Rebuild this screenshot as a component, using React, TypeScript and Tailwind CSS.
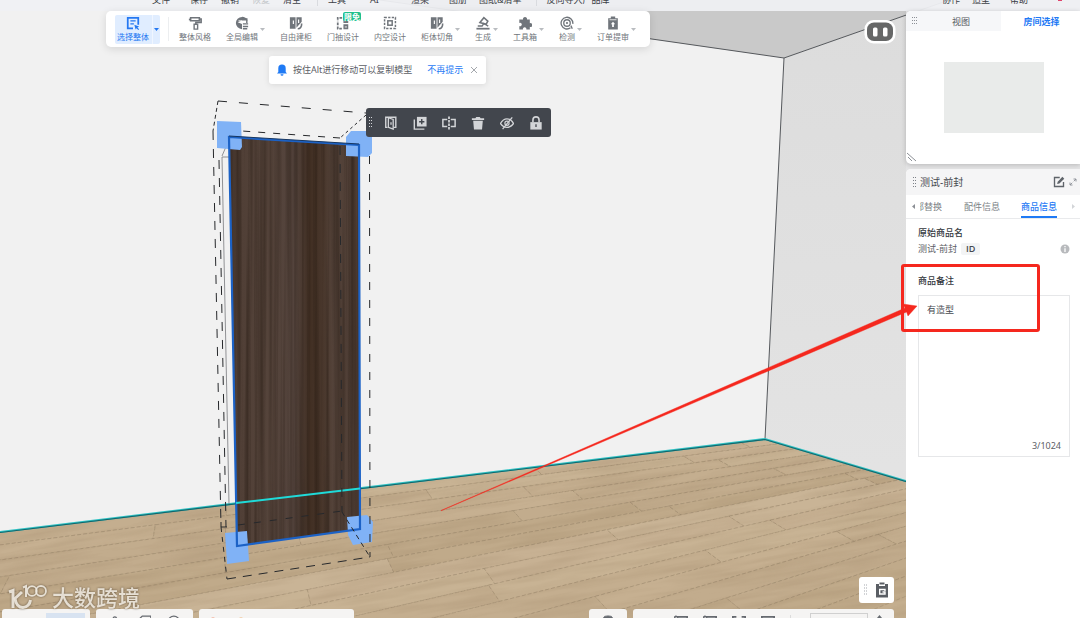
import React, { useState } from 'react';
import clsx from 'clsx';

/* ------------------------------------------------------------------ */
/* Scene geometry                                                      */
/* ------------------------------------------------------------------ */

type Point = [number, number];

// Seams run towards SEAM_VP, plank ends run towards JOINT_VP.
const SEAM_VP: Point = [1516, 348];
const JOINT_VP: Point = [212, 181];
const SEAMS = [532, 545, 560, 577, 594, 612, 631, 651, 672, 698, 726, 757, 791, 828, 870, 915, 965];
const PLANK_COLORS = ['#c6b091', '#c0aa8a', '#c8b394', '#c2ac8d', '#c9b496', '#c4ae8f', '#bfa989', '#c7b193'];

// Crossing of the seam that starts at (0, y0) and the joint line that hits y=618 at t.
function crossing(y0: number, t: number): Point {
  const [sx, sy] = SEAM_VP;
  const [jx, jy] = JOINT_VP;
  const m = (sy - y0) / sx;
  const k = (t - jx) / (618 - jy);
  const y = (y0 + m * (jx - k * jy)) / (1 - m * k);
  return [jx + k * (y - jy), y];
}

function buildPlanks() {
  const planks: { points: string; fill: string }[] = [];
  for (let row = 0; row < SEAMS.length - 1; row++) {
    let t = -500 - ((row * 197) % 330);
    let n = 0;
    while (t < 1600) {
      const next = t + 330 + ((row * 53 + n * 71) % 150);
      const corners = [
        crossing(SEAMS[row], t),
        crossing(SEAMS[row], next),
        crossing(SEAMS[row + 1], next),
        crossing(SEAMS[row + 1], t),
      ];
      planks.push({
        points: corners.map((p) => `${p[0].toFixed(1)},${p[1].toFixed(1)}`).join(' '),
        fill: PLANK_COLORS[(row * 3 + n * 5) % PLANK_COLORS.length],
      });
      t = next;
      n++;
    }
  }
  return planks;
}

const PLANKS = buildPlanks();

function Scene() {
  return (
    <svg
      className="absolute inset-0 h-full w-full"
      viewBox="0 0 1080 618"
      preserveAspectRatio="xMinYMin slice"
      aria-hidden="true"
    >
      <defs>
        <clipPath id="floor">
          <path d="M0 532 L765 439 L1080 533 V618 H0 Z" />
        </clipPath>
        <linearGradient id="rightWall" x1="0" y1="0" x2="0" y2="1">
          <stop offset="0" stopColor="#dcdcdc" />
          <stop offset="1" stopColor="#e4e4e4" />
        </linearGradient>
        <linearGradient id="board" x1="0" y1="0" x2="1" y2="0">
          <stop offset="0" stopColor="#4e3d34" />
          <stop offset="0.3" stopColor="#55443b" />
          <stop offset="0.5" stopColor="#53433c" />
          <stop offset="0.62" stopColor="#412f23" />
          <stop offset="0.72" stopColor="#49372c" />
          <stop offset="0.8" stopColor="#55443b" />
          <stop offset="1" stopColor="#4d3c33" />
        </linearGradient>
        <filter id="grain" x="0" y="0" width="100%" height="100%" colorInterpolationFilters="sRGB">
          <feTurbulence type="fractalNoise" baseFrequency="0.2 0.002" numOctaves="3" seed="11" />
          <feColorMatrix values="0 0 0 0 0.1  0 0 0 0 0.06  0 0 0 0 0.03  2 0 0 0 -0.75" />
          <feComposite in2="SourceGraphic" operator="in" />
        </filter>
        <filter id="floorGrain" x="0" y="0" width="100%" height="100%" colorInterpolationFilters="sRGB">
          <feTurbulence type="fractalNoise" baseFrequency="0.012 0.14" numOctaves="3" seed="8" />
          <feColorMatrix values="0 0 0 0 0.52  0 0 0 0 0.42  0 0 0 0 0.3  1 0 0 0 -0.36" />
          <feComposite in2="SourceGraphic" operator="in" />
        </filter>
      </defs>

      {/* room */}
      <rect width="1080" height="618" fill="#f1f1f1" />
      <path d="M380 0 L784 58 L949 0 Z" fill="#c9c9c9" />
      <path d="M784 58 L949 0 H1080 V533 L765 439 Z" fill="url(#rightWall)" />
      <path d="M380 0 L784 58 L949 0 M784 58 L765 439" fill="none" stroke="#55585c" strokeWidth="1" />

      {/* floor */}
      <g clipPath="url(#floor)">
        <rect y="430" width="1080" height="188" fill="#c4ae8e" />
        {PLANKS.map((p, i) => (
          <polygon key={i} points={p.points} fill={p.fill} stroke="#85765f" strokeOpacity="0.5" strokeWidth="0.6" strokeDasharray="4 2" />
        ))}
        <g transform="rotate(-9 450 520)">
          <rect x="-100" y="380" width="1300" height="420" fill="#000" filter="url(#floorGrain)" opacity="0.32" />
        </g>
      </g>
      <path d="M0 532 L765 439 L1080 533" fill="none" stroke="#2fc3c4" strokeWidth="2" />
      <path d="M0 532.5 L765 439.5 L1080 533.5" fill="none" stroke="#14666c" strokeWidth="1.2" />

      {/* cabinet front */}
      <path d="M229 157 H222 L229 504 M222 156 L228 142" fill="none" stroke="#77797c" strokeWidth="0.8" />
      <path d="M229 137 L359 145 L360 529 L237 546 Z" fill="url(#board)" />
      <path d="M229 137 L359 145 L360 529 L237 546 Z" fill="#000" filter="url(#grain)" opacity="0.45" />
      <g fill="#80b2f6">
        <path d="M217 121 L241 122 L242 147 L240 150 L217 148 Z" />
        <path d="M346 137 L351 131 H372 V153 L368 157 L346 156 Z" />
        <path d="M225 533 L247 531 L249 561 L227 564 Z" />
        <path d="M347 517 L367 515 L373 522 L372 542 L353 545 L348 535 Z" />
      </g>
      <path d="M229 137 L359 145 L360 529 L237 546 Z" fill="none" stroke="#1c62c6" strokeWidth="2.2" />
      <path d="M229 136 L359 144" fill="none" stroke="#17365f" strokeWidth="1" />
      <path d="M236 503 L360 488.500" stroke="#1fdad8" strokeWidth="2" />

      {/* bounding box */}
      <g fill="none" stroke="#26282b" strokeWidth="1">
        <path d="M218 101 L366 113" strokeDasharray="9 12" />
        <path d="M218 101 L213 131" strokeDasharray="4 3" />
        <path d="M366 115 L340 138" strokeDasharray="3 3" />
        <path d="M340 138 L242 131" strokeDasharray="7 8" />
        <path d="M213 131 L221 527" strokeDasharray="9 9" />
        <path d="M219 160 L226 527" strokeDasharray="9 9" />
        <path d="M221 522 V527 H227" />
        <path d="M221 527 L227 579" strokeDasharray="5 5" />
        <path d="M227 579 L370 557" strokeDasharray="9 7" />
        <path d="M369.500 156 L370 557" strokeDasharray="8 10" />
        <path d="M340 146 L342 512" strokeDasharray="9 9" />
        <path d="M238 525 L342 511" strokeDasharray="7 9" />
        <path d="M342 512 L370 557" strokeDasharray="5 4" />
      </g>
    </svg>
  );
}

function Callout() {
  return (
    <svg
      className="pointer-events-none absolute inset-0 z-20 h-full w-full"
      viewBox="0 0 1080 618"
      preserveAspectRatio="xMinYMin slice"
      aria-hidden="true"
    >
      <path d="M441 510.500 L905 308 L903 304 L917 306 L908 316 L906.500 312 L441 510.800 Z" fill="#f5281e" stroke="#f5281e" strokeWidth="0.4" />
      <rect x="902.500" y="265.500" width="136" height="65" rx="1.500" fill="none" stroke="#f5281e" strokeWidth="3" />
    </svg>
  );
}

/* ------------------------------------------------------------------ */
/* Icons                                                               */
/* ------------------------------------------------------------------ */

interface IconProps {
  className?: string;
  children: React.ReactNode;
}

function Icon({ className = 'size-3.5', children }: IconProps) {
  return (
    <svg viewBox="0 0 16 16" className={className} fill="none" stroke="currentColor" strokeWidth="2" aria-hidden="true">
      {children}
    </svg>
  );
}

const ICONS = {
  select: (
    <>
      <path d="M14 10V2H2v12h6" />
      <path d="M5 5.500h6M5 9h4" strokeWidth="1.500" />
      <path d="M9.500 10l5.500 2-2 1 2 2-1 1-2-2-1 1.500z" fill="currentColor" stroke="none" />
    </>
  ),
  style: (
    <>
      <path d="M3 2h10v3.500H3zM13 3.500h2v4H9V10" strokeWidth="1.800" />
      <path d="M1 4h2" />
      <path d="M7 9.500h4V15H7z" strokeWidth="1.600" />
    </>
  ),
  edit: (
    <>
      <path d="M8 1a7 7 0 1 0 0 14V9L3 7l5-2h6.400A7 7 0 0 0 8 1z" fill="currentColor" stroke="none" />
      <path d="M9 3.500h4.500V8M9 9h6M9 12h6M9 14.500h5" strokeWidth="1.600" />
      <path d="M4 5.500h4" stroke="#fff" strokeWidth="1" />
    </>
  ),
  cabinet: (
    <>
      <path d="M1 1.500h6.500v13H1zM8.500 1.500h6v5l-6 7z" fill="currentColor" stroke="none" />
      <path d="M5 5v4M11 4v4" stroke="#fff" strokeWidth="1.300" />
      <path d="M10 14.500c3 0 4.500-2 4.500-6" strokeWidth="1.800" />
    </>
  ),
  door: (
    <>
      <path d="M7 2H2v4M2 7.500v3M2 12v2.500h5" strokeDasharray="3 1.200" />
      <path d="M8.500 2H14v6H8.500zM8.500 9.500H14V15H8.500z" fill="currentColor" stroke="none" />
      <path d="M10 12.500h2.500" stroke="#fff" strokeWidth="1" />
    </>
  ),
  inner: (
    <>
      <rect x="1.800" y="1.800" width="12.400" height="12.400" strokeDasharray="2.600 1.500" strokeWidth="1.700" />
      <rect x="5.500" y="5.500" width="5" height="5" strokeWidth="1.700" />
    </>
  ),
  generate: (
    <>
      <path d="M0.500 14.500h15" />
      <path d="M2 11.500h5l2-3 5 3" strokeWidth="1.600" />
      <path d="M4.500 7.500L9 2l4.500 4-2 3.500z" strokeWidth="1.800" />
    </>
  ),
  puzzle: (
    <path
      d="M1.500 4h4.300a2.300 2.300 0 1 1 4.400 0h3.300v4.300a2.200 2.200 0 1 1 0 4V15.500h-4a2 2 0 1 0-3.800 0H1.500v-4a2 2 0 1 0 0-3.600z"
      fill="currentColor"
      stroke="none"
    />
  ),
  detect: (
    <>
      <path d="M12 13.500A6.700 6.700 0 1 1 14.600 9" strokeWidth="1.500" />
      <circle cx="8" cy="8" r="3.700" strokeWidth="1.500" />
      <circle cx="8" cy="8" r="1.200" fill="currentColor" stroke="none" />
      <path d="M12.500 11l1.500 3.500" strokeWidth="1.500" />
    </>
  ),
  order: (
    <>
      <path d="M2.500 2.500h11V15.500h-11zM5.500 0.500h5v2h-5z" fill="currentColor" stroke="none" />
      <path d="M4 4.300h8" stroke="#fff" strokeWidth="0.900" />
      <path d="M8 6.500l2.500 3H9v3H7v-3H5.500z" fill="#fff" stroke="none" />
    </>
  ),
};

const Arrow = ({ className }: { className?: string }) => (
  <svg viewBox="0 0 6 4" className={clsx('h-[3px] w-[5px]', className)} preserveAspectRatio="none" aria-hidden="true">
    <path d="M0 0h6L3 4z" fill="currentColor" />
  </svg>
);

function Grip({ className, rows = 4, cols = 2 }: { className?: string; rows?: number; cols?: number }) {
  return (
    <svg viewBox={`0 0 ${cols * 2} ${rows * 3 - 1}`} className={className} fill="currentColor" aria-hidden="true">
      {Array.from({ length: rows * cols }, (_, i) => (
        <rect key={i} x={(i % cols) * 2} y={Math.floor(i / cols) * 3} width="1" height="1" />
      ))}
    </svg>
  );
}

/* ------------------------------------------------------------------ */
/* Menu and toolbars                                                   */
/* ------------------------------------------------------------------ */

const MENU_BTN = 'shrink-0 whitespace-nowrap';

function MenuBar() {
  return (
    <header className="relative flex h-[11px] shrink-0 items-end justify-between overflow-hidden bg-[#eff0f3]/95 pb-[5px] pl-[152px] pr-4 text-[9px] leading-3 text-[#3c4046]">
      <nav className="flex items-end">
        <button className={clsx(MENU_BTN, 'mr-5')}>文件</button>
        <div className="flex gap-[13px]">
          <button className={MENU_BTN}>保存</button>
          <button className={MENU_BTN}>撤销</button>
          <button className={clsx(MENU_BTN, 'text-[#c3c6ca]')} disabled>恢复</button>
          <button className={MENU_BTN}>清空</button>
        </div>
        <span className="ml-4 mr-2.5 h-3 w-px bg-[#d9dbdf]" />
        <div className="flex gap-6">
          <button className={MENU_BTN}>工具</button>
          <button className={MENU_BTN}>AI</button>
        </div>
        <div className="ml-8 flex gap-5">
          <button className={MENU_BTN}>渲染</button>
          <button className={MENU_BTN}>图册</button>
        </div>
        <button className={clsx(MENU_BTN, 'ml-3')}>图纸&amp;清单</button>
        <span className="ml-3.5 mr-2.5 h-3 w-px bg-[#d9dbdf]" />
        <button className={MENU_BTN}>反向导入产品库</button>
      </nav>
      <nav className="flex items-end">
        <button className={MENU_BTN}>协作</button>
        <button className={clsx(MENU_BTN, 'ml-3 mr-5')}>造型</button>
        <button className={MENU_BTN}>帮助</button>
        <span className="mb-[5px] ml-[30px] mr-0.5 h-2 w-1 bg-[#e0446c]" />
      </nav>
    </header>
  );
}

interface Tool {
  label: string;
  icon: React.ReactNode;
  menu?: boolean;
  badge?: string;
}

const TOOLS: Tool[] = [
  { label: '整体风格', icon: ICONS.style },
  { label: '全局编辑', icon: ICONS.edit, menu: true },
  { label: '自由建柜', icon: ICONS.cabinet },
  { label: '门抽设计', icon: ICONS.door, badge: '限免' },
  { label: '内空设计', icon: ICONS.inner },
  { label: '柜体切角', icon: ICONS.cabinet, menu: true },
  { label: '生成', icon: ICONS.generate, menu: true },
  { label: '工具箱', icon: ICONS.puzzle, menu: true },
  { label: '检测', icon: ICONS.detect, menu: true },
  { label: '订单提审', icon: ICONS.order, menu: true },
];

function Toolbar() {
  return (
    <div className="ml-[106px] flex h-9 w-fit items-center rounded-[5px] bg-white pl-[9px] pr-3.5 text-[8px] leading-[10px] text-[#70757b] shadow-[0_2px_8px_rgba(0,0,0,0.12)]">
      <button className="flex h-[29px] items-center rounded-xs bg-[#e0edff] pl-0.5 text-[#2478f2]">
        <span className="flex flex-col items-center gap-0.5 whitespace-nowrap">
          <Icon>{ICONS.select}</Icon>
          选择整体
        </span>
        <span className="ml-[3px] flex h-full items-center border-l border-white/50 px-px">
          <Arrow />
        </span>
      </button>
      <span className="ml-2 mr-2.5 h-6 w-px bg-[#eceef0]" />
      <div className="flex gap-[15px]">
        {TOOLS.map((tool) => (
          <button key={tool.label} className="relative flex items-center">
            <span className="flex flex-col items-center gap-0.5 whitespace-nowrap">
              <Icon>{tool.icon}</Icon>
              {tool.label}
            </span>
            {tool.menu && (
              <span className="flex w-[7px] justify-end text-[#b9bcc0]">
                <Arrow />
              </span>
            )}
            {tool.badge && (
              <span className="absolute -right-0.5 -top-1 rounded-xs bg-[#20c08c] px-px text-[8px] font-bold leading-[9px] text-white">
                {tool.badge}
              </span>
            )}
          </button>
        ))}
      </div>
    </div>
  );
}

function Tip() {
  const [open, setOpen] = useState(true);
  if (!open) return null;

  return (
    <div
      role="status"
      className="ml-[269px] mt-[9px] flex h-7 w-fit items-center rounded-[3px] bg-white px-2 text-[9px] leading-3 text-[#5c6066] shadow-[0_1px_6px_rgba(0,0,0,0.1)]"
    >
      <svg viewBox="0 0 10 12" className="mr-1.5 h-3 w-2.5" fill="#1f7af5" aria-hidden="true">
        <path d="M5 0.500A3.700 3.700 0 0 1 8.700 4.200V8L10 9.500H0L1.300 8V4.200A3.700 3.700 0 0 1 5 0.500zM3.500 10.200h3a1.500 1.500 0 0 1-3 0z" />
      </svg>
      <span className="whitespace-nowrap">按住Alt进行移动可以复制模型</span>
      <button className="ml-[15px] whitespace-nowrap text-[#1f7af5]">不再提示</button>
      <button className="ml-[7px] text-[#a4a8ad]" aria-label="关闭" onClick={() => setOpen(false)}>
        <svg viewBox="0 0 8 8" className="size-2" stroke="currentColor" aria-hidden="true">
          <path d="M1 1l6 6M7 1L1 7" />
        </svg>
      </button>
    </div>
  );
}

const MODEL_ACTIONS = [
  {
    label: '开门',
    icon: (
      <>
        <path d="M4 13H2V1.500h11.500V13H11" strokeWidth="1.600" />
        <path d="M5 2l5.500 2v11L5 13z" strokeWidth="1.500" />
        <path d="M8 7v3" strokeWidth="1.500" />
      </>
    ),
  },
  {
    label: '复制',
    icon: (
      <>
        <path d="M4.500 1H15.500v11H4.500z" fill="currentColor" stroke="none" />
        <path d="M10 3.500v6M7 6.500h6" stroke="#42464d" strokeWidth="1.600" />
        <path d="M1.500 4v11H13" strokeWidth="1.600" />
      </>
    ),
  },
  {
    label: '镜像',
    icon: (
      <>
        <path d="M6 4H1v8h5M10 4h5v8h-5" strokeWidth="1.700" />
        <path d="M8 0.500v15" strokeWidth="2" strokeDasharray="3 1" />
      </>
    ),
  },
  {
    label: '删除',
    icon: <path d="M1 2.500h4L6 1h4l1 1.500h4v2H1zM2.500 5.500h11l-.9 10H3.400z" fill="currentColor" stroke="none" />,
  },
  {
    label: '隐藏',
    icon: (
      <>
        <path d="M0.500 8.500C3 4 6 3.200 8 3.200s5 .8 7.500 5.300C13 12.500 10 13 8 13s-5-.5-7.500-4.500z" strokeWidth="1.500" />
        <circle cx="8" cy="8.200" r="2.400" strokeWidth="1.400" />
        <path d="M14 1.500L3 15" strokeWidth="1.500" />
      </>
    ),
  },
  {
    label: '锁定',
    icon: (
      <>
        <path d="M1.500 7h13v8.500h-13z" fill="currentColor" stroke="none" />
        <path d="M4.500 7V4.500a3.500 3.500 0 0 1 7 0V7" strokeWidth="1.800" />
        <path d="M8 9.500v3" stroke="#42464d" strokeWidth="1.500" />
      </>
    ),
  },
];

function ModelActions() {
  return (
    <div className="absolute left-[366px] top-[97px] flex h-[29px] items-center rounded-[3px] bg-[#42464d] pl-[3px] pr-2 text-[#d3d5d8]">
      <Grip className="mr-[11px] h-[11px] w-1" rows={4} />
      <div className="flex gap-[15px]">
        {MODEL_ACTIONS.map((a) => (
          <button key={a.label} aria-label={a.label} title={a.label}>
            <Icon>{a.icon}</Icon>
          </button>
        ))}
      </div>
    </div>
  );
}

function AssistantButton() {
  return (
    <button className="absolute right-2.5 top-[9px]" aria-label="助手">
      <svg viewBox="0 0 32 24" className="h-6 w-8" aria-hidden="true">
        <rect x="0.500" y="0" width="31" height="23.500" rx="9" fill="#fff" />
        <rect x="3" y="2.500" width="26" height="18.500" rx="7" fill="#666767" />
        <rect x="9" y="7.500" width="4.500" height="9" rx="1.500" fill="#fff" />
        <rect x="19" y="7.500" width="4.500" height="9" rx="1.500" fill="#fff" />
      </svg>
    </button>
  );
}

/* ------------------------------------------------------------------ */
/* Bottom dock                                                         */
/* ------------------------------------------------------------------ */

const DOCK = 'flex h-8 shrink-0 items-start rounded-[3px] bg-[#f5f4f3] text-[#666a70]';

function Dock() {
  return (
    <footer className="flex h-[9px] items-start justify-between pl-0.5 pr-3">
      <div className="flex gap-1.5">
        <div className={clsx(DOCK, 'w-[88px] pl-11 pt-1')}>
          <span className="h-6 w-[39px] bg-[#d8e3f1]" />
        </div>
        <div className={clsx(DOCK, 'w-[97px] gap-4 px-3 pt-1.5')}>
          <Icon><circle cx="8" cy="4" r="2" strokeWidth="1.500" /></Icon>
          <Icon><path d="M5 1h10v10H1V5z" strokeWidth="1.500" /></Icon>
          <Icon><circle cx="8" cy="7.500" r="6.500" strokeWidth="1.500" /></Icon>
        </div>
        <div className={clsx(DOCK, 'w-[155px] gap-6 px-3 pt-2')}>
          <span className="size-1 rounded-full bg-[#f3c3b2]" />
          <span className="size-1 rounded-full bg-[#f3d3b2]" />
        </div>
      </div>
      <div className="flex gap-1.5">
        <div className={clsx(DOCK, 'w-[38px] justify-center pt-1.5')}>
          <Icon><path d="M3 3a5 2 0 0 1 10 0v10H3z" fill="currentColor" strokeWidth="1" /></Icon>
        </div>
        <div className={clsx(DOCK, 'w-[261px] gap-[15px] pl-[41px] pt-1.5')}>
          <Icon><path d="M0 3l3-2M4 2h11v11H4z" /></Icon>
          <Icon><path d="M0 3l3-2M4 2h11v11H4z" /></Icon>
          <Icon><path d="M1 6V2h4M11 2h4v4M1 10v4h4M11 14h4v-4" /></Icon>
          <Icon><path d="M1 2h14v9H1z" /></Icon>
          <span className="h-4 w-px bg-[#dcdcdc]" />
          <input aria-label="高度" className="-mt-0.5 ml-1 h-5 w-[58px] border border-[#d0d0d0] bg-transparent" />
          <Arrow className="-ml-1.5 rotate-180" />
        </div>
      </div>
    </footer>
  );
}

function Watermark() {
  return (
    <div className="absolute bottom-2 left-2 flex items-center gap-[5px] text-[#f1ebe1]/90 drop-shadow-[0_0_1px_rgba(90,75,55,0.9)]">
      <svg viewBox="0 0 39 26" className="h-[26px] w-[39px]" fill="none" stroke="currentColor" aria-hidden="true">
        <path d="M1 8L5 6.500V24" strokeWidth="3" />
        <path d="M14 8L7 14.500C8 21 11 23.500 15 23.500C19 23.500 22 20 22.500 16" strokeWidth="3" />
        <path d="M15 3.500L18 2V13" strokeWidth="2" />
        <circle cx="24" cy="7" r="4.800" strokeWidth="1.800" />
        <circle cx="33" cy="7" r="5" strokeWidth="1.800" />
      </svg>
      <span className="text-[22px] font-medium leading-6">大数跨境</span>
    </div>
  );
}

/* ------------------------------------------------------------------ */
/* Side panels                                                         */
/* ------------------------------------------------------------------ */

function RoomPanel() {
  return (
    <section className="relative h-[153px] shrink-0 overflow-hidden rounded-l-[5px] bg-white text-[9px] leading-[22px] text-[#54585e] shadow-[0_1px_5px_rgba(0,0,0,0.2)]">
      <div className="flex h-5">
        <button className="relative w-[95px] bg-[#f6f7f9] pl-[15px]">
          <Grip className="absolute left-1.5 top-1.5 h-2 w-1.5 text-[#8b8f95]" rows={3} cols={3} />
          视图
        </button>
        <button className="flex-1 pl-0.5 font-bold text-[#1f7af5]">房间选择</button>
      </div>
      <div className="ml-[38px] mt-[31px] h-[71px] w-[100px] bg-[#e9ebea]" />
      <svg viewBox="0 0 10 10" className="absolute bottom-0.5 left-px size-2.5" stroke="#8b8f95" strokeWidth="1" aria-hidden="true">
        <path d="M0 1l9 8M1 5l4 4" />
      </svg>
    </section>
  );
}

function ProductPanel() {
  const [note, setNote] = useState('有造型');

  return (
    <section className="mt-[5px] flex min-h-0 flex-1 flex-col rounded-tl-[5px] bg-white text-[9px] leading-3 text-[#5c6066]">
      <div className="flex h-[26px] shrink-0 items-center rounded-tl-[5px] bg-[#f5f5f6] pl-[7px] pr-[3px]">
        <Grip className="mr-[3px] h-[11px] w-1 text-[#7d8187]" rows={4} />
        <h2 className="text-[10px] text-[#45494f]">测试-前封</h2>
        <button className="ml-auto text-[#5f646a]" aria-label="编辑">
          <Icon className="size-3">
            <path d="M9 2H2v12h12V8" strokeWidth="1.800" />
            <path d="M5.500 10.500l.8-3L12.500 1 15 3.500 8.500 10z" fill="currentColor" stroke="none" />
          </Icon>
        </button>
        <button className="ml-1 text-[#8b8f95]" aria-label="展开">
          <Icon className="size-2">
            <path d="M9 2h5v5M7 14H2V9M9.500 6.500L14 2M2 14l4.500-4.500" strokeWidth="1.800" />
          </Icon>
        </button>
      </div>

      <div className="flex h-6 shrink-0 border-b border-[#e9eaec] pl-[5px]">
        <Arrow className="mt-2.5 rotate-90 text-[#8b8f95]" />
        <button className="ml-1 flex w-[22px] justify-end overflow-hidden whitespace-nowrap text-[#7b7f85]">
          <span className="leading-[23px]">部替换</span>
        </button>
        <button className="ml-[22px] whitespace-nowrap text-[#7b7f85]">配件信息</button>
        <button className="ml-[21px] whitespace-nowrap border-b-2 border-[#1f7af5] pt-0.5 font-medium text-[#1f7af5]">
          商品信息
        </button>
        <Arrow className="ml-auto mr-1 mt-2.5 -rotate-90 text-[#d3d5d8]" />
      </div>

      <div className="flex flex-col px-3 pr-2.5 pt-2">
        <h3 className="font-medium text-[#33373d]">原始商品名</h3>
        <div className="mt-1 flex items-center">
          <span>测试-前封</span>
          <span className="ml-1 rounded-xs bg-[#f3f4f5] px-[5px] font-['Open_Sans'] font-semibold text-[#45494f]">ID</span>
          <svg viewBox="0 0 10 10" className="ml-auto size-2.5" aria-hidden="true">
            <circle cx="5" cy="5" r="4.500" fill="#b8babd" />
            <path d="M5 4.200V8M5 2v1.300" stroke="#fff" strokeWidth="1.300" />
          </svg>
        </div>
        <label htmlFor="note" className="mt-5 font-medium text-[#33373d]">商品备注</label>
        <div className="mt-2 flex h-[162px] flex-col border border-[#e6e7e9] px-2 pb-1">
          <textarea
            id="note"
            value={note}
            onChange={(e) => setNote(e.target.value)}
            maxLength={1024}
            className="flex-1 resize-none bg-transparent pt-2 text-[#45494f] outline-none"
          />
          <span className="self-end">{note.length}/1024</span>
        </div>
      </div>
    </section>
  );
}

export default function App() {
  return (
    <div className="relative flex h-screen flex-col overflow-hidden bg-[#f1f1f1] font-['Noto_Sans','Noto_Sans_CJK_SC',sans-serif]">
      <Scene />
      <MenuBar />
      <div className="relative flex min-h-0 flex-1">
        <main className="relative flex min-w-0 flex-1 flex-col">
          <Toolbar />
          <Tip />
          <ModelActions />
          <AssistantButton />
          <button
            className="mb-1.5 mr-3 mt-auto flex h-[26px] w-[35px] items-center justify-center gap-1.5 self-end rounded-[3px] bg-white text-[#5a5e64]"
            aria-label="清单"
          >
            <Grip className="h-3 w-1 text-[#a4a8ad]" rows={4} />
            <Icon className="size-4">
              <path d="M2 2h12v13.500H2z" fill="currentColor" stroke="none" />
              <path d="M5 2.500h6" stroke="#fff" strokeWidth="3" />
              <path d="M5.500 1.500h5" strokeWidth="2" />
              <path d="M5 7.500h6v1.500M5 12h6V10H8.500M5.700 7.500V12" stroke="#fff" strokeWidth="1.400" />
            </Icon>
          </button>
          <Dock />
          <Watermark />
        </main>
        <aside className="flex w-[174px] shrink-0 flex-col bg-[#e4e4e5]">
          <RoomPanel />
          <ProductPanel />
        </aside>
      </div>
      <Callout />
    </div>
  );
}
